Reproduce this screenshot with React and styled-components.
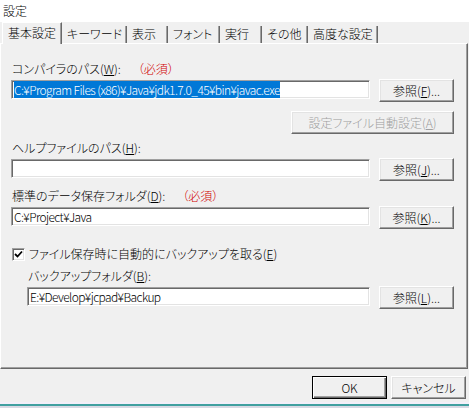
import React from "react";
import styled, { createGlobalStyle, css } from "styled-components";

const GlobalStyle = createGlobalStyle`
  html, body { margin: 0; padding: 0; background: #f0f0f0; }
  body {
    font-family: "Noto Sans CJK JP", "Noto Sans", sans-serif;
    font-size: 12px;
    font-weight: 300;
    color: #000;
    font-feature-settings: "palt";
  }
  * { box-sizing: border-box; }
`;

const Window = styled.div`
  width: 469px;
  height: 408px;
  display: flex;
  flex-direction: column;
  overflow: hidden;
  background: #f0f0f0;
`;

const TitleBar = styled.div`
  height: 22px;
  background: #fff;
  padding-left: 3px;
  display: flex;
  align-items: center;
  line-height: 14px;
`;

const TabStrip = styled.div`
  height: 21px;
  display: flex;
  align-items: flex-end;
  padding-left: 2px;
  position: relative;
  z-index: 1;
`;

const Tab = styled.div`
  width: ${(p) => p.$w}px;
  display: flex;
  align-items: center;
  padding-left: 5px;
  white-space: nowrap;
  line-height: 14px;
  border-right: 1px solid #696969;
  box-shadow: inset -1px 0 0 #a0a0a0;
  background: #f0f0f0;
  ${(p) =>
    p.$active
      ? css`
          height: 22px;
          margin-bottom: -1px;
          border-left: 1px solid #fff;
          border-top: 1px solid #fff;
          padding-bottom: 1px;
        `
      : css`
          height: 17px;
          padding-bottom: 2px;
        `}
`;

const Panel = styled.div`
  height: 326px;
  margin-right: 1px;
  border-top: 1px solid #fff;
  border-left: 1px solid #fff;
  border-right: 1px solid #696969;
  border-bottom: 1px solid #696969;
  box-shadow: inset -1px -1px 0 #a0a0a0;
  padding: 18px 13px 0 10px;
  display: flex;
  flex-direction: column;
`;

const Label = styled.div`
  height: 14px;
  line-height: 14px;
  display: flex;
  white-space: nowrap;
  margin-top: ${(p) => p.$mt || 0}px;
  padding-left: ${(p) => p.$indent || 1}px;
`;

const Required = styled.span`
  color: #d00000;
  margin-left: 17px;
`;

const Row = styled.div`
  display: flex;
  gap: 9px;
  height: 23px;
  align-items: flex-start;
  justify-content: ${(p) => (p.$end ? "flex-end" : "flex-start")};
  margin-top: ${(p) => p.$mt ?? 3}px;
  padding-left: ${(p) => p.$indent || 0}px;
`;

const TextBox = styled.div`
  flex: 1;
  height: 19px;
  margin-top: 1px;
  background: #fff;
  border: 1px solid;
  border-color: #a0a0a0 #fff #fff #a0a0a0;
  box-shadow: inset 1px 1px 0 #696969, inset -1px -1px 0 #e3e3e3;
  padding: 0 1px 0 2px;
  line-height: 17px;
  letter-spacing: -0.6px;
  white-space: nowrap;
  overflow: hidden;
`;

const Selected = styled.span`
  background: #0078d7;
  color: #fff;
`;

const Button = styled.button`
  width: ${(p) => p.$w}px;
  height: 23px;
  padding: 0;
  font: inherit;
  line-height: 14px;
  background: #f0f0f0;
  color: ${(p) => (p.disabled ? "#a0a0a0" : "#000")};
  white-space: nowrap;
  ${(p) =>
    p.$default
      ? css`
          border: 1px solid #000;
          box-shadow: inset 1px 1px 0 #fff, inset -1px -1px 0 #696969,
            inset -2px -2px 0 #a0a0a0;
        `
      : css`
          border: 1px solid;
          border-color: #fff #696969 #696969 #fff;
          box-shadow: inset -1px -1px 0 #a0a0a0, inset 1px 1px 0 #e3e3e3;
        `}
`;

const U = styled.span`
  text-decoration: underline;
  text-underline-offset: 1px;
`;

const CheckRow = styled.label`
  display: flex;
  align-items: center;
  gap: 4px;
  height: 14px;
  margin-top: 18px;
  padding-left: 1px;
  white-space: nowrap;
  line-height: 14px;
`;

const Box = styled.span`
  width: 13px;
  height: 13px;
  flex: none;
  background: #fff;
  border: 1px solid;
  border-color: #a0a0a0 #fff #fff #a0a0a0;
  box-shadow: inset 1px 1px 0 #696969, inset -1px -1px 0 #e3e3e3;
  display: flex;
  align-items: center;
  justify-content: center;
`;

const Footer = styled.div`
  height: 33px;
  display: flex;
  justify-content: flex-end;
  align-items: flex-start;
  gap: 4px;
  padding: 7px 3px 0 0;
`;

const BottomStrip = styled.div`
  flex: 1;
  background: linear-gradient(
    to bottom,
    #f3eff9 0 2px,
    #41a0a0 2px 4px,
    #d9d9e4 4px
  );
`;

const tabs = [
  { t: "基本設定", w: 60, active: true },
  { t: "キーワード", w: 65 },
  { t: "表示", w: 41 },
  { t: "フォント", w: 52 },
  { t: "実行", w: 42 },
  { t: "その他", w: 46 },
  { t: "高度な設定", w: 70 },
];

const Browse = ({ k }) => (
  <Button $w={75}>
    参照(<U>{k}</U>)...
  </Button>
);

export default function App() {
  return (
    <>
      <GlobalStyle />
      <Window>
        <TitleBar>設定</TitleBar>
        <TabStrip>
          {tabs.map((t) => (
            <Tab key={t.t} $w={t.w} $active={t.active}>
              {t.t}
            </Tab>
          ))}
        </TabStrip>
        <Panel>
          <Label>
            <span>
              コンパイラのパス(<U>W</U>):
            </span>
            <Required>（必須）</Required>
          </Label>
          <Row>
            <TextBox>
              <Selected>C:¥Program Files (x86)¥Java¥jdk1.7.0_45¥bin¥javac.exe</Selected>
            </TextBox>
            <Browse k="F" />
          </Row>
          <Row $end $mt={9}>
            <Button $w={163} disabled>
              設定ファイル自動設定(<U>A</U>)
            </Button>
          </Row>
          <Label $mt={7}>
            <span>
              ヘルプファイルのパス(<U>H</U>):
            </span>
          </Label>
          <Row>
            <TextBox />
            <Browse k="J" />
          </Row>
          <Label $mt={8}>
            <span>
              標準のデータ保存フォルダ(<U>D</U>):
            </span>
            <Required>（必須）</Required>
          </Label>
          <Row>
            <TextBox>C:¥Project¥Java</TextBox>
            <Browse k="K" />
          </Row>
          <CheckRow>
            <Box>
              <svg width="9" height="9" viewBox="0 0 9 9">
                <path d="M1 4 L3.5 6.5 L8 1.5" fill="none" stroke="#000" strokeWidth="1.8" />
              </svg>
            </Box>
            <span>
              ファイル保存時に自動的にバックアップを取る(<U>E</U>)
            </span>
          </CheckRow>
          <Label $mt={8} $indent={17}>
            <span>
              バックアップフォルダ(<U>B</U>):
            </span>
          </Label>
          <Row $indent={16}>
            <TextBox>E:¥Develop¥jcpad¥Backup</TextBox>
            <Browse k="L" />
          </Row>
        </Panel>
        <Footer>
          <Button $w={75} $default>
            OK
          </Button>
          <Button $w={75}>キャンセル</Button>
        </Footer>
        <BottomStrip />
      </Window>
    </>
  );
}
